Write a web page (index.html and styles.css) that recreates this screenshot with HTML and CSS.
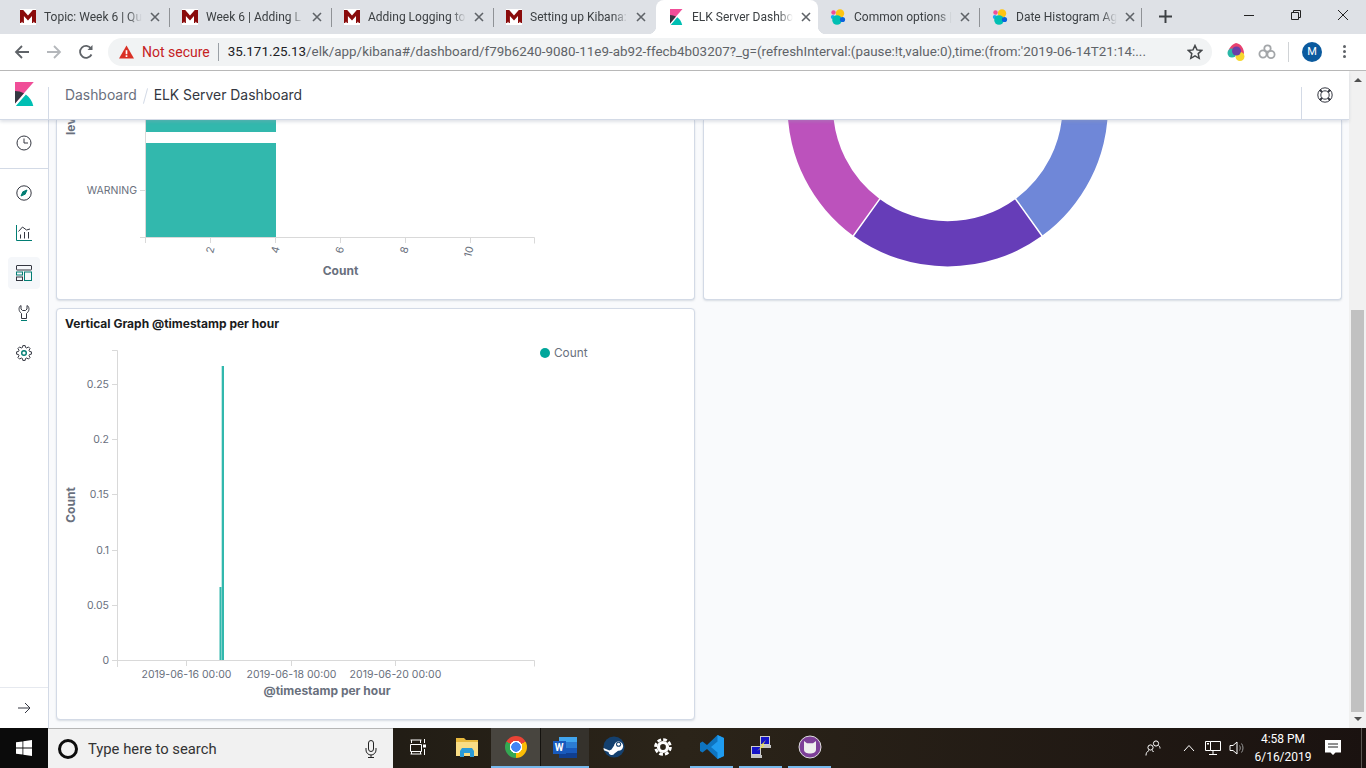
FILE: index.html
```html
<!DOCTYPE html>
<html lang="en">

<head>
    <meta charset="UTF-8">
    <title>ELK Server Dashboard</title>
    <link rel="stylesheet" href="styles.css">
</head>

<body>
    <svg class="defs" width="0" height="0">
        <symbol id="fav-m" viewBox="0 0 16 16">
            <rect width="16" height="16" fill="#fff" />
            <path fill="#8a0b0b" d="M0 1h3.2L8 6.6 12.8 1H16v13h-1.2l-.9-1.4-.9 1.4h-1V7L8 11.4 3.9 7v7h-1l-.9-1.4L1.200 14H0z" />
        </symbol>
        <symbol id="fav-elastic" viewBox="0 0 16 16">
            <circle cx="10" cy="4.500" r="4.200" fill="#fec514" />
            <circle cx="3.500" cy="3.500" r="2.200" fill="#f04e98" />
            <circle cx="2.800" cy="8" r="2" fill="#1ba9f5" />
            <circle cx="7" cy="11" r="4.800" fill="#00bfb3" />
            <circle cx="12.500" cy="10.500" r="2.600" fill="#0b64dd" />
        </symbol>
        <symbol id="tab-x" viewBox="0 0 10 10">
            <path d="M1 1l8 8M9 1l-8 8" fill="none" stroke="#5f6368" stroke-width="1.600" />
        </symbol>
    </svg>

    <!-- browser chrome -->
    <div class="tabstrip">
        <div class="tab tab-sep">
            <svg class="favicon"><use href="#fav-m" /></svg>
            <span class="tab-title">Topic: Week 6 | Qu</span>
            <svg class="tab-close"><use href="#tab-x" /></svg>
        </div>
        <div class="tab tab-sep">
            <svg class="favicon"><use href="#fav-m" /></svg>
            <span class="tab-title">Week 6 | Adding L</span>
            <svg class="tab-close"><use href="#tab-x" /></svg>
        </div>
        <div class="tab tab-sep">
            <svg class="favicon"><use href="#fav-m" /></svg>
            <span class="tab-title">Adding Logging to</span>
            <svg class="tab-close"><use href="#tab-x" /></svg>
        </div>
        <div class="tab">
            <svg class="favicon"><use href="#fav-m" /></svg>
            <span class="tab-title">Setting up Kibana:</span>
            <svg class="tab-close"><use href="#tab-x" /></svg>
        </div>
        <div class="tab tab-active">
            <svg class="favicon" viewBox="0 0 32 32">
                <path fill="#f04e98" d="M4 0v28.800L29 0z" />
                <path fill="#343741" d="M4 12v16.800l11.900-13.700A24.700 24.700 0 0 0 4 12" />
                <path fill="#00bfb3" d="M18.500 16.700L6.300 30.800 5.200 32h23.200c-1.300-6.300-4.900-11.700-9.900-15.300" />
            </svg>
            <span class="tab-title">ELK Server Dashbo</span>
            <svg class="tab-close"><use href="#tab-x" /></svg>
        </div>
        <div class="tab tab-sep">
            <svg class="favicon"><use href="#fav-elastic" /></svg>
            <span class="tab-title">Common options |</span>
            <svg class="tab-close"><use href="#tab-x" /></svg>
        </div>
        <div class="tab tab-sep">
            <svg class="favicon"><use href="#fav-elastic" /></svg>
            <span class="tab-title">Date Histogram Ag</span>
            <svg class="tab-close"><use href="#tab-x" /></svg>
        </div>
        <svg class="new-tab" viewBox="0 0 12 12">
            <path d="M6 0v12M0 6h12" fill="none" stroke="#3c4043" stroke-width="1.800" />
        </svg>
        <div class="window-controls">
            <svg class="win-btn" viewBox="0 0 12 12"><path d="M1 6.500h10" stroke="#222" fill="none" /></svg>
            <svg class="win-btn" viewBox="0 0 12 12">
                <path d="M1.500 3.500h7v7h-7zM3.500 3.500v-2h7v7h-2" stroke="#222" fill="none" />
            </svg>
            <svg class="win-btn" viewBox="0 0 12 12"><path d="M1 1l10 10M11 1L1 11" stroke="#222" fill="none" /></svg>
        </div>
    </div>

    <div class="toolbar">
        <svg class="tool-icon" viewBox="0 0 16 16">
            <path d="M15 8H2M8 2L2 8l6 6" fill="none" stroke="#5f6368" stroke-width="1.800" />
        </svg>
        <svg class="tool-icon" viewBox="0 0 16 16">
            <path d="M1 8h13M8 2l6 6-6 6" fill="none" stroke="#b4b7bb" stroke-width="1.800" />
        </svg>
        <svg class="tool-icon" viewBox="0 0 16 16">
            <path d="M13.500 10.500A6 6 0 1 1 13 4.500" fill="none" stroke="#5f6368" stroke-width="1.800" />
            <path d="M14.500 1v5h-5z" fill="#5f6368" />
        </svg>
        <div class="omnibox">
            <svg class="warn-icon" viewBox="0 0 16 14">
                <path d="M8 0l8 14H0z" fill="#d93025" />
                <path d="M7.100 5h1.800v4.500H7.100zM7.100 10.500h1.800v1.700H7.100z" fill="#fff" />
            </svg>
            <span class="not-secure">Not secure</span>
            <span class="omni-divider"></span>
            <span class="url"><span class="url-host">35.171.25.13</span>/elk/app/kibana#/dashboard/f79b6240-9080-11e9-ab92-ffecb4b03207?_g=(refreshInterval:(pause:!t,value:0),time:(from:'2019-06-14T21:14:...</span>
            <svg class="star-icon" viewBox="0 0 16 16">
                <path d="M8 1.500l2 4.400 4.800.5-3.600 3.200 1 4.700L8 11.900l-4.200 2.400 1-4.700L1.200 6.400 6 5.900z" fill="none" stroke="#44474a" stroke-width="1.500" />
            </svg>
        </div>
        <div class="extensions">
            <svg class="ext-icon" viewBox="0 0 18 18">
                <path d="M9 0c5 1 8 5 8 11H1C1 6 4 2 9 0z" fill="#e8416f" />
                <circle cx="5" cy="10" r="4.500" fill="#2bb8a8" />
                <circle cx="13" cy="13.500" r="4.500" fill="#f7d82e" />
                <circle cx="9.500" cy="8" r="4.500" fill="#6a3fa8" />
            </svg>
            <svg class="ext-icon ext-gray" viewBox="0 0 18 18">
                <circle cx="5" cy="11" r="3.600" fill="none" stroke="#a3a6a9" stroke-width="1.800" />
                <circle cx="13" cy="11.500" r="3.600" fill="none" stroke="#a3a6a9" stroke-width="1.800" />
                <circle cx="9.500" cy="5.500" r="3.200" fill="none" stroke="#a3a6a9" stroke-width="1.800" />
            </svg>
            <span class="ext-divider"></span>
            <span class="avatar">M</span>
            <span class="menu-dots"><i></i><i></i><i></i></span>
        </div>
    </div>

    <div class="page">
        <div class="kibana">
            <header class="kbn-header">
                <div class="logo-cell">
                    <svg class="kbn-logo" viewBox="0 0 32 32">
                        <path fill="#f04e98" d="M4 0v28.800L29 0z" />
                        <path fill="#343741" d="M4 12v16.800l11.900-13.700A24.700 24.700 0 0 0 4 12" />
                        <path fill="#00bfb3" d="M18.500 16.700L6.300 30.800 5.200 32h23.200c-1.300-6.300-4.900-11.700-9.900-15.300" />
                    </svg>
                </div>
                <nav class="breadcrumbs">
                    <span class="crumb">Dashboard</span>
                    <span class="crumb-slash"></span>
                    <span class="crumb-current">ELK Server Dashboard</span>
                </nav>
                <div class="help-cell">
                    <svg class="help-icon" viewBox="0 0 16 16" fill="none" stroke="#343741">
                        <circle cx="8" cy="8" r="7.200" />
                        <circle cx="8" cy="8" r="4.200" />
                        <path d="M3 3l2 2M13 3l-2 2M3 13l2-2M13 13l-2-2" stroke-width="2" />
                    </svg>
                </div>
            </header>

            <div class="kbn-body">
                <aside class="sidenav">
                    <div class="nav-recent">
                        <svg class="nav-icon" viewBox="0 0 16 16" fill="none" stroke="#343741">
                            <circle cx="8" cy="8" r="7" />
                            <path d="M8 3.500V8h4" />
                        </svg>
                    </div>
                    <div class="nav-list">
                        <div class="nav-item">
                            <svg class="nav-icon" viewBox="0 0 16 16" fill="none" stroke="#343741">
                                <circle cx="8" cy="8" r="7.200" />
                                <path d="M11 5L9.200 9.200 5 11l1.800-4.200z" fill="#017d73" stroke="#017d73" />
                            </svg>
                        </div>
                        <div class="nav-item">
                            <svg class="nav-icon" viewBox="0 0 16 16" fill="none" stroke="#343741">
                                <path d="M.5 0v15.500H16" stroke="#017d73" />
                                <path d="M2.500 6.500L6.500 2l4 3 3.500-1" />
                                <path d="M4.500 13.500v-4M8.500 13.500V7M12.500 13.500V7" />
                            </svg>
                        </div>
                        <div class="nav-item nav-item-active">
                            <svg class="nav-icon" viewBox="0 0 16 16" fill="none" stroke="#343741">
                                <rect x=".5" y=".5" width="15" height="4.500" rx=".5" />
                                <rect x=".5" y="7" width="6" height="3" stroke="#017d73" />
                                <rect x=".5" y="12" width="6" height="3.500" />
                                <rect x="8.500" y="7" width="7" height="8.500" stroke="#017d73" />
                            </svg>
                        </div>
                        <div class="nav-item">
                            <svg class="nav-icon" viewBox="0 0 16 16" fill="none" stroke="#343741">
                                <path d="M5 .5C2.800 1.500 2.300 5 4.300 7.300L5.500 8.500v5h5v-5l1.200-1.200C13.700 5 13.200 1.500 11 .5V4L9.500 5.500h-3L5 4z" />
                                <path d="M5 15.500h6" stroke="#017d73" />
                            </svg>
                        </div>
                        <div class="nav-item">
                            <svg class="nav-icon" viewBox="-8 -8 16 16" fill="none" stroke="#343741">
                                <polygon points="5.48,-1.57 7.41,-1.17 7.41,1.17 5.48,1.57 4.99,2.76 6.07,4.41 4.41,6.07 2.76,4.99 1.57,5.48 1.17,7.41 -1.17,7.41 -1.57,5.48 -2.76,4.99 -4.41,6.07 -6.07,4.41 -4.99,2.76 -5.48,1.57 -7.41,1.17 -7.41,-1.17 -5.48,-1.57 -4.99,-2.76 -6.07,-4.41 -4.41,-6.07 -2.76,-4.99 -1.57,-5.48 -1.17,-7.41 1.17,-7.41 1.57,-5.48 2.76,-4.99 4.41,-6.07 6.07,-4.41 4.99,-2.76" />
                                <circle r="2.300" stroke="#017d73" stroke-width="1.400" />
                            </svg>
                        </div>
                    </div>
                    <div class="nav-expand">
                        <svg class="nav-icon" viewBox="0 0 16 16" fill="none" stroke="#343741">
                            <path d="M2 8h12M9 3l5 5-5 5" />
                        </svg>
                    </div>
                </aside>

                <main class="dashboard">
                    <section class="panel panel-cut">
                        <svg class="chart" width="637" height="179" viewBox="57 120 637 179">
                            <rect class="bar" x="146" y="110" width="130" height="22" />
                            <rect class="bar" x="146" y="143" width="130" height="94" />
                            <path class="axis" d="M145.500 110v133M140 237.500h394.500v6M210.500 237v6M275.500 237v6M340.500 237v6M405.500 237v6M470.500 237v6M140 190.500h5" />
                            <text class="tick" x="137" y="194" text-anchor="end">WARNING</text>
                            <text class="tick" transform="translate(213 254) rotate(-75)">2</text>
                            <text class="tick" transform="translate(278 254) rotate(-75)">4</text>
                            <text class="tick" transform="translate(342.500 254) rotate(-75)">6</text>
                            <text class="tick" transform="translate(407 254) rotate(-75)">8</text>
                            <text class="tick" transform="translate(471 258) rotate(-75)">10</text>
                            <text class="axis-title" x="340.500" y="275" text-anchor="middle">Count</text>
                            <text class="axis-title" transform="translate(75 135) rotate(-90)">lev</text>
                        </svg>
                    </section>

                    <section class="panel panel-cut">
                        <svg class="chart" width="637" height="179" viewBox="704 120 637 179">
                            <path fill="#bc52bc" d="M853.300 235.800A160.500 160.500 0 0 1 787.500 106H833A115 115 0 0 0 879.600 199z" />
                            <path fill="#663db8" d="M853.300 235.800A160.500 160.500 0 0 0 1042 235.800L1015.600 199A115 115 0 0 1 879.600 199z" />
                            <path fill="#6f87d8" d="M1042 235.800A160.500 160.500 0 0 0 1108 106H1062.500A115 115 0 0 1 1015.600 199z" />
                            <path class="slice-gap" d="M853 236.200L880 198.600M1042.300 236.200L1015.300 198.600" />
                        </svg>
                    </section>

                    <section class="panel">
                        <h3 class="panel-title">Vertical Graph @timestamp per hour</h3>
                        <svg class="chart" width="637" height="384" viewBox="57 335 637 384">
                            <rect class="bar" x="219.500" y="587" width="2" height="73" />
                            <rect class="bar" x="221.700" y="366" width="2.300" height="294" />
                            <path class="axis" d="M112 350.500h5.500V667M112 384.500h5M112 439.500h5M112 494.500h5M112 550.500h5M112 605.500h5M112 660.500h422.500v6M186.500 660v6M291.500 660v6M395.500 660v6" />
                            <text class="tick" x="109" y="388" text-anchor="end">0.25</text>
                            <text class="tick" x="109" y="443" text-anchor="end">0.2</text>
                            <text class="tick" x="109" y="498" text-anchor="end">0.15</text>
                            <text class="tick" x="109" y="554" text-anchor="end">0.1</text>
                            <text class="tick" x="109" y="609" text-anchor="end">0.05</text>
                            <text class="tick" x="109" y="664" text-anchor="end">0</text>
                            <text class="tick" x="186.500" y="678" text-anchor="middle">2019-06-16 00:00</text>
                            <text class="tick" x="291.500" y="678" text-anchor="middle">2019-06-18 00:00</text>
                            <text class="tick" x="395.500" y="678" text-anchor="middle">2019-06-20 00:00</text>
                            <text class="axis-title" x="327" y="695" text-anchor="middle">@timestamp per hour</text>
                            <text class="axis-title" transform="translate(75 505) rotate(-90)" text-anchor="middle">Count</text>
                            <circle cx="545" cy="353" r="5" fill="#00a69b" />
                            <text class="legend" x="554" y="357">Count</text>
                        </svg>
                    </section>
                </main>
            </div>
        </div>

        <div class="scrollbar">
            <span class="scroll-up"></span>
            <span class="scroll-track"><span class="scroll-thumb"></span></span>
            <span class="scroll-down"></span>
        </div>
    </div>

    <!-- windows taskbar -->
    <footer class="taskbar">
        <div class="start">
            <svg class="start-logo" viewBox="0 0 16 16">
                <path fill="#fff" d="M0 2.300l6.500-.9v6.200H0zM7.300 1.300L16 0v7.600H7.300zM0 8.400h6.500v6.200L0 13.700zM7.300 8.400H16V16l-8.700-1.300z" />
            </svg>
        </div>
        <div class="search-box">
            <span class="cortana"></span>
            <span class="search-text">Type here to search</span>
            <svg class="mic" viewBox="0 0 12 18" fill="none" stroke="#222">
                <rect x="3.500" y=".5" width="5" height="11" rx="2.500" />
                <path d="M1 8v2a5 5 0 0 0 10 0V8M6 15v2.500M3 17.500h6" />
            </svg>
        </div>
        <div class="task-btn">
            <svg class="task-icon" viewBox="0 0 16 16" fill="none" stroke="#fff">
                <path d="M.5 1h11M1.500 1v3M10.500 1v3M.5 5.500h11v7H.5zM.5 15h11M1.500 12.500V15M10.500 12.500V15M14.500 0v4M14.500 10v6" />
                <rect x="13" y="5.500" width="3" height="3" fill="#fff" stroke="none" />
            </svg>
        </div>
        <div class="task-btn">
            <svg class="task-icon-lg" viewBox="0 0 22 20">
                <path d="M0 1h8l2 2h12v16H0z" fill="#e8b93e" />
                <path d="M0 5h22v14H0z" fill="#f9dd85" />
                <path d="M4 20v-6l2-3h10l2 3v6h-4v-4H8v4z" fill="#2a9bd8" />
            </svg>
        </div>
        <div class="task-btn task-btn-open task-btn-hot">
            <span class="chrome-icon"></span>
        </div>
        <div class="task-btn task-btn-open task-btn-word">
            <span class="word-icon"><span class="word-box">W</span></span>
        </div>
        <div class="task-btn">
            <svg class="task-icon-lg" viewBox="0 0 24 24">
                <circle cx="12" cy="12" r="11.500" fill="#14406e" />
                <path d="M.5 13l6.500 2.700a3.500 3.500 0 0 1 2-.7l3-4.300a5 5 0 1 1 4.500 5.300L12.500 19A3.500 3.500 0 0 1 6 17.500L1 15.500z" fill="#fff" />
                <circle cx="17" cy="9" r="2.800" fill="#14406e" />
                <circle cx="17" cy="9" r="1.600" fill="#fff" />
            </svg>
        </div>
        <div class="task-btn">
            <svg class="gear-icon" viewBox="0 0 20 20" fill="none" stroke="#fff">
                <circle cx="10" cy="10" r="5" stroke-width="3.600" />
                <circle cx="10" cy="10" r="8.300" stroke-width="3" stroke-dasharray="4.200 2.310" />
            </svg>
        </div>
        <div class="task-btn task-btn-open">
            <svg class="task-icon-xl" viewBox="0 0 24 24">
                <path fill="#0e74c0" d="M17.500 0L24 3v18l-6.500 3L7 14l-4.500 3.500L0 16V8l2.500-1.500L7 10z" />
                <path fill="#1f9cf0" d="M17.500 0L24 3v18l-6.500 3zM17.500 6.500L11 12l6.500 5.500z" />
            </svg>
        </div>
        <div class="task-btn task-btn-open">
            <svg class="task-icon-xl" viewBox="0 0 24 24">
                <rect x="11.500" y="1.500" width="9" height="8" fill="#1414c8" stroke="#ccc" />
                <path d="M11 10h11v3H11z" fill="#c4c4c4" />
                <rect x="2.500" y="11.500" width="9" height="8" fill="#1414c8" stroke="#ccc" />
                <path d="M2 20h11v3H2z" fill="#c4c4c4" />
                <path d="M17 5l-5 5h2.500L8 16l8-5.500h-2.500z" fill="#f5e62a" />
            </svg>
        </div>
        <div class="task-btn task-btn-open">
            <svg class="task-icon-xl" viewBox="0 0 24 24">
                <circle cx="12" cy="12" r="11" fill="#7d3f98" stroke="#ddd" />
                <path d="M6 6l3 2.200h6L18 6v8.500c0 3-3 4-6 4s-6-1-6-4z" fill="#eee" />
            </svg>
        </div>
        <div class="tray">
            <svg class="tray-icon tray-people" viewBox="0 0 16 16" fill="none" stroke="#fff">
                <circle cx="5.500" cy="7.500" r="2.600" />
                <circle cx="11" cy="3.500" r="2.600" />
                <path d="M1 15.500c0-2.500 1-4 3-5M7 10.500c.7.300 1.300.8 1.600 1.500M13.500 5.500c1 .5 1.500 1.500 1.500 3" />
            </svg>
            <svg class="tray-caret" viewBox="0 0 12 8" fill="none" stroke="#fff">
                <path d="M1 7l5-5.500L11 7" />
            </svg>
            <svg class="tray-icon" viewBox="0 0 16 16" fill="none" stroke="#fff">
                <path d="M5.500 1.500h10v9h-10M.5 1.500h5v9h-5zM8 10.500v4M4 14.500h8" />
                <rect x="2" y="3" width="2" height="1.500" fill="#fff" stroke="none" />
            </svg>
            <svg class="tray-icon" viewBox="0 0 16 16" fill="none" stroke="#fff">
                <path d="M1 5.500h3L8 2v12l-4-3.500H1z" />
                <path d="M10.500 5.500c1 1.500 1 3.500 0 5M12.500 3.500c2 2.500 2 6.500 0 9" stroke="#9a9a9a" />
            </svg>
            <div class="clock">
                <span>4:58 PM</span>
                <span>6/16/2019</span>
            </div>
            <svg class="notify" viewBox="0 0 16 16">
                <path fill="#fff" d="M0 0h16v12.500h-5.500L8 15l-2.500-2.500H0z" />
                <path stroke="#222" d="M3 4h10M3 7h10" />
            </svg>
            <span class="show-desktop"></span>
        </div>
    </footer>
</body>

</html>
```

FILE: styles.css
```css
* {
    box-sizing: border-box;
}

body {
    margin: 0;
    width: 1366px;
    height: 768px;
    overflow: hidden;
    display: flex;
    flex-direction: column;
    font-family: Inter, "Liberation Sans", sans-serif;
    background-color: white;
}

.defs {
    position: absolute;
}

/* Browser tabs */
.tabstrip {
    height: 34px;
    display: flex;
    align-items: stretch;
    padding-left: 8px;
    background-color: #dee1e6;
    font-family: Roboto, sans-serif;
}

.tab {
    position: relative;
    width: 162px;
    display: flex;
    align-items: center;
    padding: 0 10px 0 12px;
    font-size: 12px;
    color: #3c4043;
}

.tab-sep {
    background: linear-gradient(#8f9296, #8f9296) right 8px / 1px 19px no-repeat;
}

.tab-active {
    background: white;
    border-radius: 8px 8px 0 0;
}

.tab-active::before,
.tab-active::after {
    content: "";
    position: absolute;
    bottom: 0;
    width: 8px;
    height: 8px;
}

.tab-active::before {
    left: -8px;
    background: radial-gradient(circle at 0 0, transparent 8px, white 8.500px);
}

.tab-active::after {
    right: -8px;
    background: radial-gradient(circle at 100% 0, transparent 8px, white 8.500px);
}

.favicon {
    flex: none;
    width: 16px;
    height: 16px;
    margin-right: 8px;
}

.tab-title {
    flex: 1;
    white-space: nowrap;
    -webkit-mask-image: linear-gradient(to right, black 85%, transparent 100%);
    mask-image: linear-gradient(to right, black 85%, transparent 100%);
}

.tab-close {
    flex: none;
    width: 10px;
    height: 10px;
    margin-left: 8px;
}

.new-tab {
    width: 13px;
    height: 13px;
    margin: 10px 0 0 17px;
}

.window-controls {
    margin-left: auto;
    display: flex;
    align-items: flex-start;
}

.win-btn {
    width: 12px;
    height: 12px;
    margin: 9px 17px 0 18px;
}

/* Browser toolbar */
.toolbar {
    height: 37px;
    display: flex;
    align-items: center;
    padding: 0 0 1px 14px;
    border-bottom: 1px solid #b9b9b9;
    background-color: white;
    font-family: Roboto, sans-serif;
}

.tool-icon {
    width: 16px;
    height: 16px;
    margin-right: 16px;
}

.omnibox {
    width: 1104px;
    height: 28px;
    margin-left: -2px;
    display: flex;
    align-items: center;
    padding: 0 9px 0 11px;
    border-radius: 14px;
    background-color: #f1f3f4;
    font-size: 14px;
    white-space: nowrap;
}

.warn-icon {
    flex: none;
    width: 15px;
    height: 14px;
}

.not-secure {
    margin-left: 8px;
    color: #c5221f;
}

.omni-divider {
    width: 1px;
    height: 18px;
    margin: 0 9px 0 8px;
    background-color: #9aa0a6;
}

.url {
    flex: 1;
    font-size: 13.400px;
    color: #5f6368;
}

.url-host {
    color: #202124;
}

.star-icon {
    flex: none;
    width: 16px;
    height: 16px;
}

.extensions {
    display: flex;
    align-items: center;
}

.ext-icon {
    width: 18px;
    height: 18px;
    margin-left: 15px;
}

.ext-gray {
    margin-left: 13px;
}

.ext-divider {
    width: 1px;
    height: 20px;
    margin-left: 12px;
    background-color: #d0d3d6;
}

.avatar {
    width: 20px;
    height: 20px;
    margin-left: 13px;
    border-radius: 50%;
    background-color: #0b5a9e;
    color: white;
    font-size: 11px;
    line-height: 20px;
    text-align: center;
}

.menu-dots {
    margin-left: 21px;
    display: flex;
    flex-direction: column;
    gap: 2px;
}

.menu-dots i {
    width: 3px;
    height: 3px;
    border-radius: 50%;
    background-color: #5f6368;
}

/* Kibana */
.page {
    flex: 1;
    min-height: 0;
    display: flex;
}

.kibana {
    flex: 1;
    min-width: 0;
    display: flex;
    flex-direction: column;
}

.kbn-header {
    position: relative;
    z-index: 2;
    height: 49px;
    flex: none;
    display: flex;
    align-items: stretch;
    padding-top: 16px;
    background-color: white;
    border-bottom: 1px solid #d3dae6;
    box-shadow: 0 2px 3px rgba(152, 162, 179, 0.3);
}

.logo-cell {
    width: 49px;
    height: 32px;
    border-right: 1px solid #d3dae6;
}

.kbn-logo {
    display: block;
    width: 24px;
    height: 24px;
    margin: -5px 0 0 12px;
}

.breadcrumbs {
    flex: 1;
    display: flex;
    align-items: flex-start;
    padding-left: 16px;
    font-size: 13.900px;
    line-height: 17px;
}

.crumb {
    color: #69707d;
}

.crumb-slash {
    width: 1px;
    height: 16px;
    margin: 1px 8px 0 8px;
    background-color: #d3dae6;
    transform: rotate(15deg);
}

.crumb-current {
    color: #343741;
}

.help-cell {
    width: 48px;
    height: 32px;
    border-left: 1px solid #d3dae6;
}

.help-icon {
    display: block;
    width: 16px;
    height: 16px;
    margin: 0 0 0 15px;
}

.kbn-body {
    flex: 1;
    min-height: 0;
    display: flex;
}

.sidenav {
    width: 49px;
    flex: none;
    display: flex;
    flex-direction: column;
    background-color: white;
    border-right: 1px solid #d3dae6;
    box-shadow: 1px 0 3px rgba(152, 162, 179, 0.2);
}

.nav-icon {
    width: 16px;
    height: 16px;
}

.nav-recent {
    height: 49px;
    flex: none;
    display: flex;
    align-items: center;
    justify-content: center;
    padding-bottom: 3px;
    border-bottom: 1px solid #d3dae6;
}

.nav-list {
    display: flex;
    flex-direction: column;
    gap: 8px;
    padding-top: 8px;
}

.nav-item {
    width: 32px;
    height: 32px;
    margin-left: 8px;
    display: flex;
    align-items: center;
    justify-content: center;
    border-radius: 4px;
}

.nav-item-active {
    background-color: #f5f7fa;
}

.nav-expand {
    margin-top: auto;
    height: 41px;
    display: flex;
    align-items: center;
    justify-content: center;
    border-top: 1px solid #e6e9ef;
}

.dashboard {
    flex: 1;
    display: grid;
    grid-template-columns: 639px 639px;
    grid-template-rows: 180px 412px;
    gap: 8px;
    padding-left: 7px;
    background-color: #f9fafc;
}

.panel {
    overflow: hidden;
    background-color: white;
    border: 1px solid #d3dae6;
    border-radius: 4px;
    box-shadow: 0 1px 2px rgba(152, 162, 179, 0.35);
}

.panel-cut {
    border-top: none;
    border-radius: 0 0 4px 4px;
}

.panel-title {
    margin: 0;
    height: 26px;
    padding: 8px 8px 0;
    font-size: 12px;
    line-height: 14px;
    font-weight: 700;
    color: #1a1c21;
}

.chart {
    display: block;
}

.bar {
    fill: #32b8ad;
}

.axis {
    fill: none;
    stroke: #d9d9d9;
}

.slice-gap {
    fill: none;
    stroke: white;
    stroke-width: 1.500px;
}

.tick {
    font-size: 10.500px;
    fill: #69707d;
}

.legend {
    font-size: 11.800px;
    fill: #69707d;
}

.axis-title {
    font-size: 12px;
    font-weight: 700;
    fill: #69707d;
}

/* Page scrollbar */
.scrollbar {
    width: 17px;
    flex: none;
    display: flex;
    flex-direction: column;
    align-items: center;
    background-color: #f1f1f1;
}

.scroll-up,
.scroll-down {
    width: 0;
    height: 0;
    margin: 7px 0;
    border-left: 4px solid transparent;
    border-right: 4px solid transparent;
}

.scroll-up {
    border-bottom: 4px solid #505050;
}

.scroll-down {
    border-top: 4px solid #505050;
}

.scroll-track {
    flex: 1;
    width: 100%;
    display: flex;
    justify-content: center;
    align-items: flex-end;
}

.scroll-thumb {
    width: 13px;
    height: 402px;
    margin-bottom: -2px;
    background-color: #c1c1c1;
}

/* Windows taskbar */
.taskbar {
    height: 40px;
    flex: none;
    display: flex;
    background: linear-gradient(to right, #15130f, #2b2419 50%, #1a1210);
    font-family: Roboto, sans-serif;
}

.start {
    width: 48px;
    display: flex;
    align-items: center;
    justify-content: center;
    background-color: #0b0b0b;
}

.start-logo {
    width: 16px;
    height: 16px;
}

.search-box {
    width: 345px;
    display: flex;
    align-items: center;
    padding: 0 16px 0 10px;
    background-color: #f1f1f1;
    border-top: 1px solid #b5b5b5;
}

.cortana {
    width: 20px;
    height: 20px;
    border: 3px solid #0c0c0c;
    border-radius: 50%;
}

.search-text {
    flex: 1;
    margin-left: 10px;
    font-size: 14.800px;
    color: #333;
}

.mic {
    width: 12px;
    height: 18px;
}

.task-btn {
    width: 49px;
    display: flex;
    align-items: center;
    justify-content: center;
    border-bottom: 2px solid transparent;
}

.task-btn-open {
    border-image: linear-gradient(to right, transparent 4px, #76b9ed 4px, #76b9ed calc(100% - 4px), transparent calc(100% - 4px)) 1;
}

.task-btn-hot {
    background-color: #48453f;
    border-image: linear-gradient(#76b9ed, #76b9ed) 1;
}

.task-btn-word {
    background-color: #35322c;
    box-shadow: inset 1px 0 #14120e;
    border-image: linear-gradient(#76b9ed, #76b9ed) 1;
}

.task-icon {
    width: 16px;
    height: 16px;
}

.gear-icon {
    width: 18px;
    height: 18px;
}

.task-icon-lg {
    width: 22px;
    height: 22px;
}

.task-icon-xl {
    width: 24px;
    height: 24px;
}

.chrome-icon {
    width: 22px;
    height: 22px;
    border-radius: 50%;
    background:
        radial-gradient(circle, #4285f4 0 4.500px, white 5px 6px, transparent 6.500px),
        conic-gradient(from 300deg, #ea4335 0 120deg, #fbbc05 120deg 240deg, #34a853 240deg);
}

.word-icon {
    width: 24px;
    height: 21px;
    display: flex;
    align-items: center;
    background: linear-gradient(#41a5ee 25%, #2b7cd3 25% 50%, #185abd 50% 75%, #103f91 75%) right / 18px 100% no-repeat;
}

.word-box {
    width: 13px;
    height: 13px;
    background-color: #185abd;
    color: white;
    font-size: 10px;
    font-weight: 700;
    line-height: 13px;
    text-align: center;
}

.tray {
    margin-left: auto;
    display: flex;
    align-items: center;
    color: white;
}

.tray-icon {
    width: 16px;
    height: 16px;
    margin-right: 8px;
}

.tray-people {
    margin-right: 10px;
}

.tray-caret {
    width: 12px;
    height: 8px;
    margin: 0 10px 0 12px;
}

.clock {
    width: 62px;
    margin-left: -1px;
    display: flex;
    flex-direction: column;
    align-items: center;
    gap: 3px;
    font-size: 12px;
    line-height: 15px;
}

.notify {
    width: 16px;
    height: 16px;
    margin: 0 20px 0 11px;
}

.show-desktop {
    width: 1px;
    height: 40px;
    margin-right: 4px;
    background-color: #5a5652;
}
```
